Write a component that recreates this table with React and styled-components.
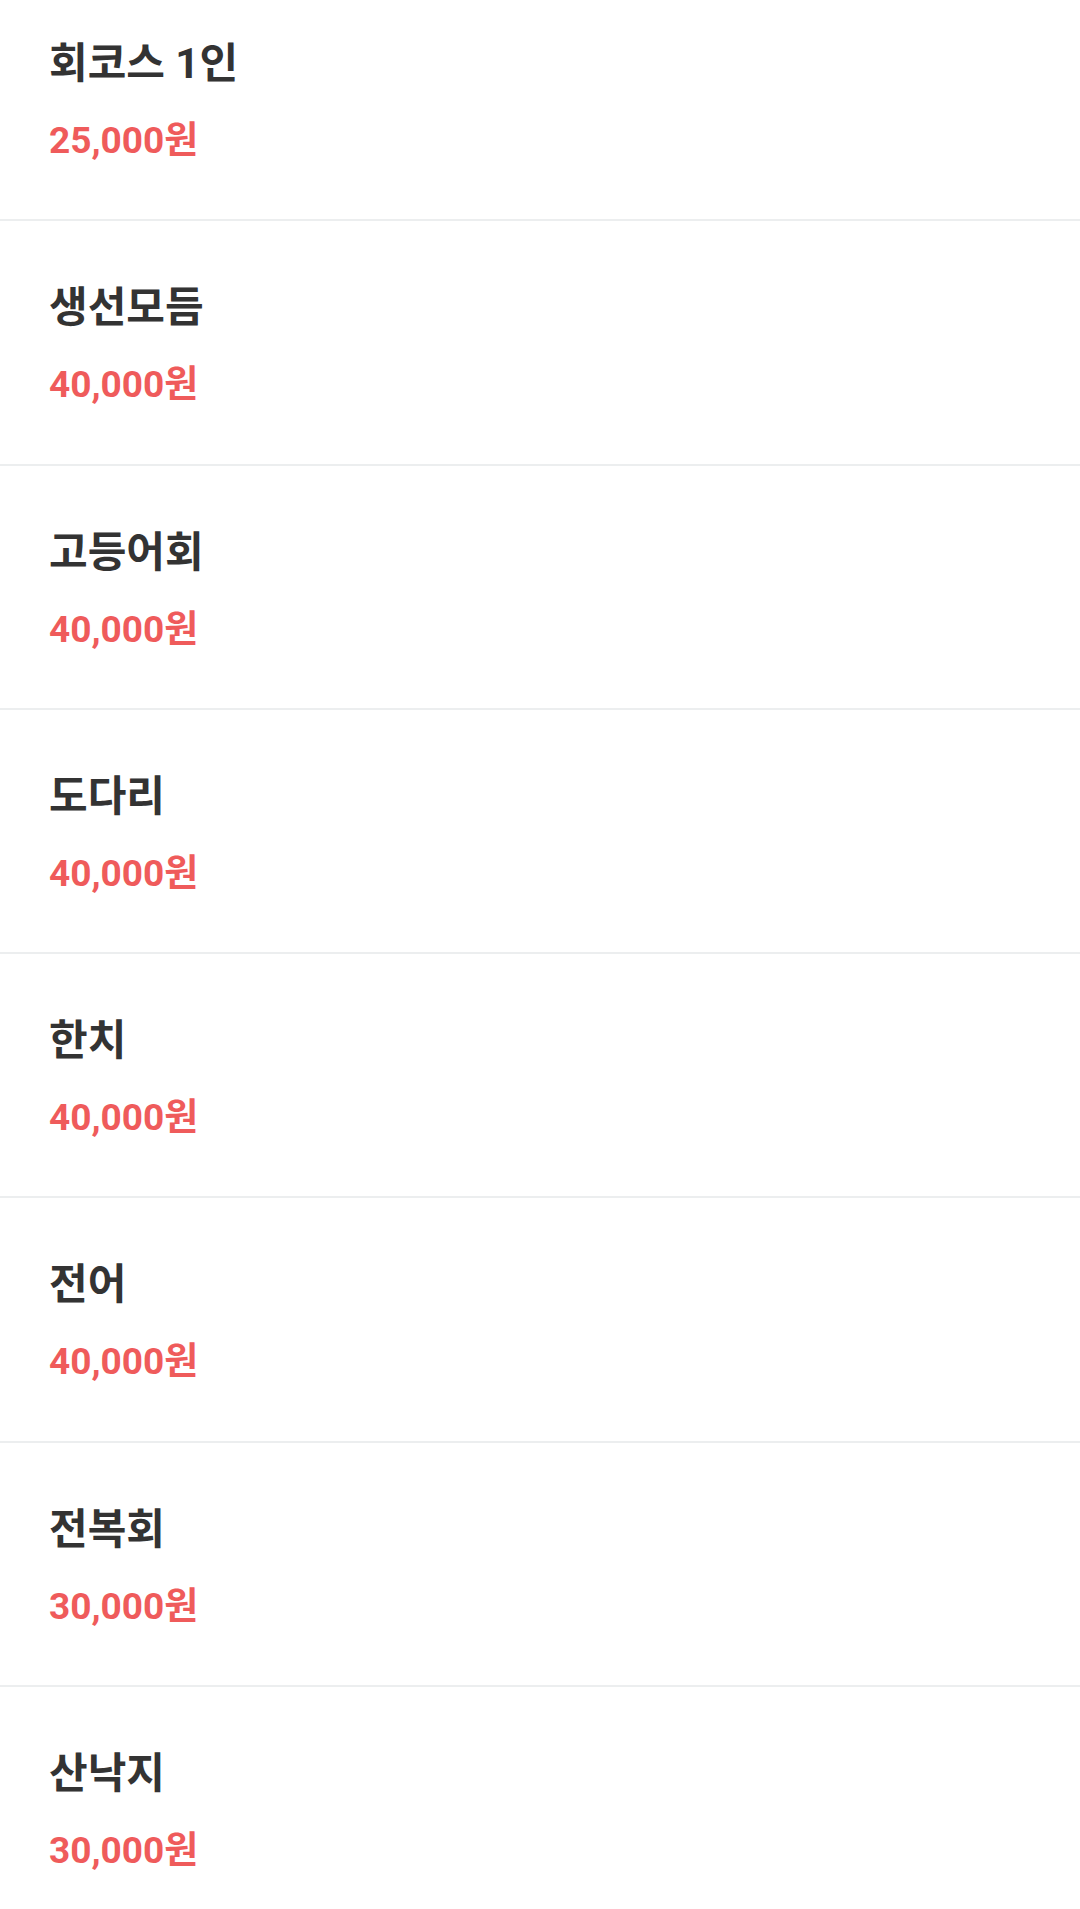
import React from "react";
import styled, { createGlobalStyle } from "styled-components";

const Global = createGlobalStyle`
  html, body { margin: 0; padding: 0; background: #fff; overflow: hidden; }
  body { font-family: Roboto, "Noto Sans CJK KR", sans-serif; }
`;

const List = styled.ul`
  list-style: none;
  margin: -23px 0 0;
  padding: 0;
`;

const Item = styled.li`
  height: 244.3px;
  box-sizing: border-box;
  padding: 62px 49px 0;
  border-bottom: 2px solid #eceeef;
  display: flex;
  flex-direction: column;
  gap: 29px;
`;

const Name = styled.div`
  font-size: 42px;
  font-weight: 700;
  color: #333;
  line-height: 50px;
`;

const Price = styled.div`
  font-size: 37px;
  font-weight: 700;
  color: #ef5b5b;
  line-height: 46px;
`;

const items = [
  ["회코스 1인", "25,000원"],
  ["생선모듬", "40,000원"],
  ["고등어회", "40,000원"],
  ["도다리", "40,000원"],
  ["한치", "40,000원"],
  ["전어", "40,000원"],
  ["전복회", "30,000원"],
  ["산낙지", "30,000원"],
];

export default function App() {
  return (
    <>
      <Global />
      <List>
        {items.map(([n, p]) => (
          <Item key={n}>
            <Name>{n}</Name>
            <Price>{p}</Price>
          </Item>
        ))}
      </List>
    </>
  );
}
